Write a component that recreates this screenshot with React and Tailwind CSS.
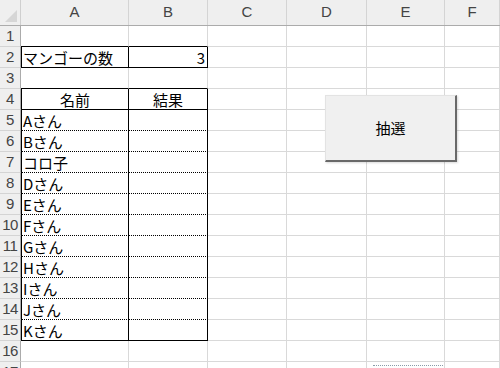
import React from "react";

const cols = [
  { key: "A", w: "w-[108px]" },
  { key: "B", w: "w-[79px]" },
  { key: "C", w: "w-[79px]" },
  { key: "D", w: "w-[80px]" },
  { key: "E", w: "w-[78px]" },
  { key: "F", w: "flex-1" },
];

const names = ["Aさん", "Bさん", "コロ子", "Dさん", "Eさん", "Fさん", "Gさん", "Hさん", "Iさん", "Jさん", "Kさん"];

function cellClass(r, c) {
  let right = "border-r border-r-[#d9d9d9]";
  let bottom = "border-b border-b-[#d9d9d9]";
  let left = "";
  const inTable = (r === 2 || (r >= 4 && r <= 15)) && (c === "A" || c === "B");
  if (inTable) {
    right = "border-r border-r-black";
    if (r === 2 || r === 4 || r === 15) bottom = "border-b border-b-black";
    else bottom = "border-b border-b-black [border-bottom-style:dotted]";
    if (c === "A") left = "border-l border-l-black";
  }
  if ((r === 1 || r === 3) && (c === "A" || c === "B")) {
    bottom = "border-b border-b-black";
  }
  return `${right} ${bottom} ${left}`;
}

function content(r, c) {
  if (r === 2 && c === "A") return <span className="pl-[1px]">マンゴーの数</span>;
  if (r === 2 && c === "B") return <span className="ml-auto pr-[2px]">3</span>;
  if (r === 4 && c === "A") return <span className="mx-auto">名前</span>;
  if (r === 4 && c === "B") return <span className="mx-auto">結果</span>;
  if (r >= 5 && r <= 15 && c === "A") return <span className="pl-[1px]">{names[r - 5]}</span>;
  return null;
}

export default function App() {
  const rows = Array.from({ length: 17 }, (_, i) => i + 1);
  return (
    <div className="relative w-[500px] h-[368px] overflow-hidden bg-white font-['Noto_Sans_CJK_JP',sans-serif] text-[15px] text-black">
      <div className="flex h-[26px] bg-[#efefef] border-b border-b-[#ababab]">
        <div className="w-[21px] shrink-0 border-r border-r-[#cfcfcf] relative">
          <svg className="absolute right-[3px] bottom-[3px]" width="12" height="12" viewBox="0 0 12 12">
            <polygon points="12,0 12,12 0,12" fill="#d6d6d6" />
          </svg>
        </div>
        {cols.map((c) => (
          <div
            key={c.key}
            className={`${c.w} shrink-0 border-r border-r-[#d4d4d4] flex items-center justify-center font-['Liberation_Sans',sans-serif] text-[15px] text-[#444]`}
          >
            {c.key}
          </div>
        ))}
      </div>
      {rows.map((r) => (
        <div key={r} className="flex h-[21px]">
          <div className="w-[21px] shrink-0 bg-[#efefef] border-r border-r-[#ababab] border-b border-b-[#d4d4d4] flex items-center justify-center font-['Liberation_Sans',sans-serif] text-[15px] text-[#444] tracking-[-0.5px]">
            {r}
          </div>
          {cols.map((c) => (
            <div
              key={c.key}
              className={`${c.w} shrink-0 box-border flex items-center leading-none whitespace-nowrap overflow-hidden ${cellClass(r, c.key)}`}
            >
              {content(r, c.key)}
            </div>
          ))}
        </div>
      ))}
      <div className="absolute left-[373px] top-[365px] w-[70px] border-t border-dotted border-t-[#8a9aa8]" />
      <div className="absolute left-[325px] top-[95px] w-[132px] h-[67px] bg-[#f0f0f0] border-l border-t border-l-[#e3e3e3] border-t-[#e3e3e3] border-r-2 border-b-2 border-r-[#696969] border-b-[#696969] shadow-[1px_1px_2px_rgba(0,0,0,0.15)] flex items-center justify-center text-[15px] text-black">
        抽選
      </div>
    </div>
  );
}
